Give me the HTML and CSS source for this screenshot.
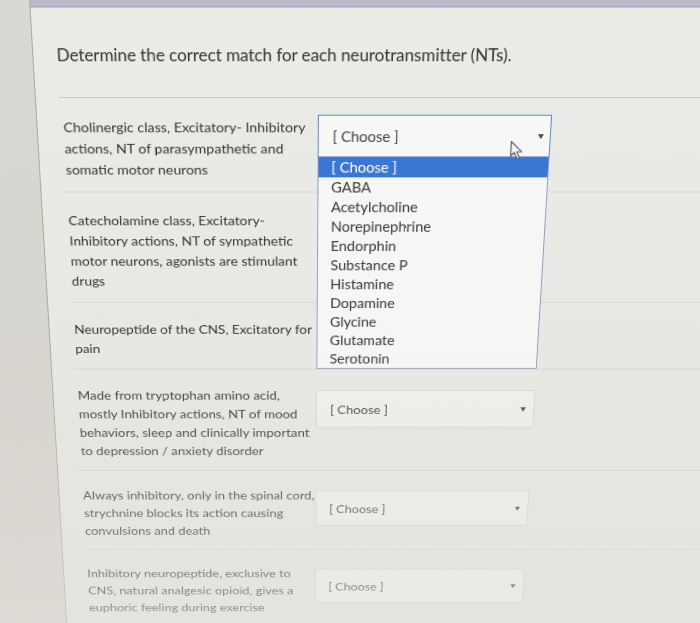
FILE: index.html
```html
<!DOCTYPE html>
<html lang="en">
<head>
    <meta charset="UTF-8">
    <meta name="viewport" content="width=device-width, initial-scale=1.0">
    <title>Quiz - Matching</title>
    <link rel="stylesheet" href="styles.css">
</head>
<body>
    <div class="screen">
        <div class="gutter"></div>

        <div class="panel">
            <div class="topbar"></div>

            <div class="question">
                <h1 class="question-text">Determine the correct match for each neurotransmitter (NTs).</h1>

                <div class="answer is-open">
                    <div class="answer-text">Cholinergic class, Excitatory- Inhibitory<br>actions, NT of parasympathetic and<br>somatic motor neurons</div>
                    <div class="select-wrap">
                        <div class="select is-focused">
                            <span>[ Choose ]</span>
                            <span class="caret"></span>
                        </div>
                        <ul class="options">
                            <li class="selected">[ Choose ]</li>
                            <li>GABA</li>
                            <li>Acetylcholine</li>
                            <li>Norepinephrine</li>
                            <li>Endorphin</li>
                            <li>Substance P</li>
                            <li>Histamine</li>
                            <li>Dopamine</li>
                            <li>Glycine</li>
                            <li>Glutamate</li>
                            <li>Serotonin</li>
                        </ul>
                        <svg class="pointer" width="14" height="21" viewBox="0 0 14 21">
                            <path d="M1.5 1.5 L1.5 16.5 L5 13 L8 19.5 L10.5 18.4 L7.6 12.2 L12.4 12.2 Z" fill="#f4f4f4" stroke="#5a5a5a" stroke-width="1.1" stroke-linejoin="round"/>
                        </svg>
                    </div>
                </div>

                <!-- the next two selects sit under the open list -->
                <div class="answer">
                    <div class="answer-text">Catecholamine class, Excitatory-<br>Inhibitory actions, NT of sympathetic<br>motor neurons, agonists are stimulant<br>drugs</div>
                </div>

                <div class="answer">
                    <div class="answer-text">Neuropeptide of the CNS, Excitatory for<br>pain</div>
                </div>

                <div class="answer">
                    <div class="answer-text">Made from tryptophan amino acid,<br>mostly Inhibitory actions, NT of mood<br>behaviors, sleep and clinically important<br>to depression / anxiety disorder</div>
                    <div class="select-wrap">
                        <div class="select"><span>[ Choose ]</span><span class="caret"></span></div>
                    </div>
                </div>

                <div class="answer">
                    <div class="answer-text">Always inhibitory, only in the spinal cord,<br>strychnine blocks its action causing<br>convulsions and death</div>
                    <div class="select-wrap">
                        <div class="select"><span>[ Choose ]</span><span class="caret"></span></div>
                    </div>
                </div>

                <div class="answer">
                    <div class="answer-text">Inhibitory neuropeptide, exclusive to<br>CNS, natural analgesic opioid, gives a<br>euphoric feeling during exercise</div>
                    <div class="select-wrap">
                        <div class="select"><span>[ Choose ]</span><span class="caret"></span></div>
                    </div>
                </div>
            </div>
        </div>
    </div>
</body>
</html>
```

FILE: styles.css
```css
* {
    margin: 0;
    padding: 0;
    box-sizing: border-box;
}

html, body {
    height: 100%;
    overflow: hidden;
}

body {
    font-family: Lato, "Open Sans", sans-serif;
    background: #d5d4cd;
    color: #363636;
}

/* whole page is tilted away slightly, like a monitor seen from above */
.screen {
    position: relative;
    display: flex;
    width: 900px;
    height: 800px;
    margin-left: -100px;
    transform-origin: 392px 100px;
    transform: perspective(760px) rotateX(-10deg);
}

.screen::after {
    content: "";
    position: absolute;
    inset: 0;
    background: linear-gradient(to bottom, rgba(230, 228, 222, 0) 45%, rgba(230, 228, 222, 0.55) 88%);
    pointer-events: none;
    z-index: 5;
}

.gutter {
    width: 135px;
    flex-shrink: 0;
    background: linear-gradient(to bottom, #d9d8d2, #d2d0c8);
}

.panel {
    flex: 1;
    border-left: 1px solid #a9a8a0;
    background: linear-gradient(to bottom, #ebebe8 0%, #e7e7e3 50%, #e3e1db 100%);
}

.topbar {
    height: 8px;
    background: #b9bbcb;
    border-bottom: 1px solid #9c9eb0;
}

.question {
    margin-left: 23px;
}

.question-text {
    font-size: 17px;
    font-weight: 400;
    line-height: 24px;
    color: #333;
    padding: 35px 0 30px;
    border-bottom: 1px solid #c6c6c3;
    letter-spacing: -0.1px;
}

.answer {
    display: flex;
    align-items: flex-start;
    padding: 19px 0 12px 3px;
    border-bottom: 1px solid #d3d3cf;
}

.answer-text {
    width: 253px;
    font-size: 14.3px;
    line-height: 22px;
    white-space: nowrap;
}

.select-wrap {
    position: relative;
    width: 235px;
    margin-left: 3px;
    margin-top: 5px;
}

.answer.is-open .select-wrap {
    margin-top: -2px;
    z-index: 2;
}

.select {
    display: flex;
    align-items: center;
    justify-content: space-between;
    height: 44px;
    padding: 0 8px 0 14px;
    font-size: 14px;
    color: #444;
    background: #efefed;
    border: 1px solid #d5d5d1;
}

.select.is-focused {
    font-size: 15px;
    padding-right: 6px;
    background: #f7f7f6;
    border-color: #5f86cf;
}

.caret {
    width: 0;
    height: 0;
    border-left: 3.5px solid transparent;
    border-right: 3.5px solid transparent;
    border-top: 5px solid #4a4a4a;
}

.options {
    position: absolute;
    top: 100%;
    left: 0;
    right: 0;
    list-style: none;
    background: #f6f6f5;
    border: 1px solid #8d9fc4;
    border-top: none;
}

.options li {
    font-size: 15px;
    line-height: 21px;
    padding: 0 13px;
    color: #3a3a3a;
}

.options li.selected {
    background: #3a77d5;
    color: #fff;
}

.pointer {
    position: absolute;
    left: 194px;
    top: 26px;
}
```
